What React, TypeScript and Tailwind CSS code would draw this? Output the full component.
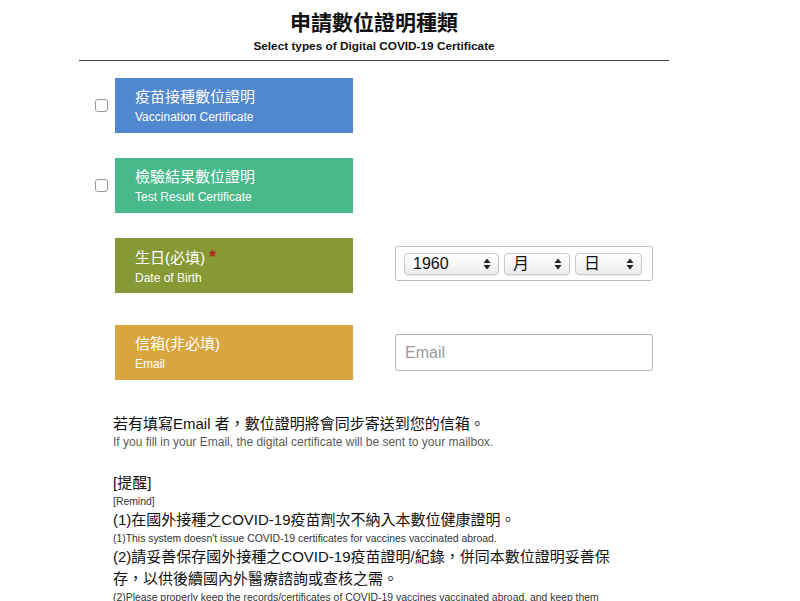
import { useState } from "react";

const font = "font-['Liberation_Sans','Noto_Sans_CJK_TC',sans-serif]";

const Arrows = () => (
  <svg width="8" height="12" viewBox="0 0 8 12" className="shrink-0">
    <path d="M4 0.5 L7.5 5 L0.5 5 Z" fill="#222" />
    <path d="M4 11.5 L7.5 7 L0.5 7 Z" fill="#222" />
  </svg>
);

const FakeSelect = ({ label, width }: { label: string; width: string }) => (
  <div
    className={`${width} h-[22px] flex items-center justify-between pl-[8px] pr-[7px] rounded-[4px] border border-[#c8c8c8] bg-gradient-to-b from-white to-[#ececec] shadow-[0_1px_1px_rgba(0,0,0,0.08)] text-[16px] leading-none text-[#111]`}
  >
    <span>{label}</span>
    <Arrows />
  </div>
);

type BoxProps = {
  color: string;
  zh: string;
  en: string;
  required?: boolean;
};

const LabelBox = ({ color, zh, en, required }: BoxProps) => (
  <div className={`w-[238px] h-[55px] ${color} pl-[20px] pt-[9px] text-white`}>
    <div className="text-[15px] leading-[20px]">
      {zh}
      {required && <span className="text-[#b3261e] text-[18px] ml-[4px] font-bold">*</span>}
    </div>
    <div className="text-[12px] leading-[17px] mt-[2px]">{en}</div>
  </div>
);

const Check = () => {
  const [on, setOn] = useState(false);
  return (
    <input
      type="checkbox"
      checked={on}
      onChange={() => setOn(!on)}
      className="appearance-none w-[13px] h-[13px] rounded-[3px] border border-[#9a9a9a] bg-white shrink-0"
    />
  );
};

export default function App() {
  return (
    <div className={`${font} bg-white min-h-[601px] text-[#111]`}>
      <div className="ml-[79px] w-[590px]">
        <header className="text-center pt-[11px]">
          <h1 className="text-[21px] leading-[24px] font-bold">申請數位證明種類</h1>
          <p className="text-[11.8px] leading-[14px] font-bold mt-[4px]">
            Select types of Digital COVID-19 Certificate
          </p>
        </header>
        <div className="mt-[7px] border-t border-[#444]" />

        <div className="mt-[17px] flex items-center">
          <div className="w-[36px] pl-[16px] flex items-center">
            <Check />
          </div>
          <LabelBox color="bg-[#5087cf]" zh="疫苗接種數位證明" en="Vaccination Certificate" />
        </div>

        <div className="mt-[25px] flex items-center">
          <div className="w-[36px] pl-[16px] flex items-center">
            <Check />
          </div>
          <LabelBox color="bg-[#47b98a]" zh="檢驗結果數位證明" en="Test Result Certificate" />
        </div>

        <div className="mt-[25px] flex items-start">
          <div className="w-[36px]" />
          <LabelBox color="bg-[#879934]" zh="生日(必填)" en="Date of Birth" required />
          <div className="ml-[42px] mt-[8px] w-[258px] h-[35px] rounded-[3px] border border-[#bdbdbd] flex items-center gap-[5px] pl-[8px]">
            <FakeSelect label="1960" width="w-[95px]" />
            <FakeSelect label="月" width="w-[66px]" />
            <FakeSelect label="日" width="w-[67px]" />
          </div>
        </div>

        <div className="mt-[32px] flex items-center">
          <div className="w-[36px]" />
          <LabelBox color="bg-[#d9a53e]" zh="信箱(非必填)" en="Email" />
          <input
            type="text"
            placeholder="Email"
            className="ml-[42px] w-[258px] h-[37px] rounded-[3px] border border-[#b5b5b5] px-[9px] text-[16px] placeholder:text-[#9a9a9a] outline-none"
          />
        </div>

        <section className="mt-[33px] pl-[34px] w-[536px]">
          <p className="text-[15px] leading-[22px]">若有填寫Email 者，數位證明將會同步寄送到您的信箱。</p>
          <p className="text-[12px] leading-[15px] text-[#5a5a5a]">
            If you fill in your Email, the digital certificate will be sent to your mailbox.
          </p>

          <p className="mt-[22px] text-[15px] leading-[22px]">[提醒]</p>
          <p className="text-[10.4px] leading-[15px] text-[#333]">[Remind]</p>
          <p className="text-[15px] leading-[22px]">(1)在國外接種之COVID-19疫苗劑次不納入本數位健康證明。</p>
          <p className="text-[10.4px] leading-[15px] text-[#333]">
            (1)This system doesn't issue COVID-19 certificates for vaccines vaccinated abroad.
          </p>
          <p className="text-[15px] leading-[22px] w-[502px]">
            (2)請妥善保存國外接種之COVID-19疫苗證明/紀錄，併同本數位證明妥善保存，以供後續國內外醫療諮詢或查核之需。
          </p>
          <p className="text-[10.4px] leading-[15px] text-[#333]">
            (2)Please properly keep the records/certificates of COVID-19 vaccines vaccinated abroad, and keep them
          </p>
        </section>
      </div>
    </div>
  );
}
